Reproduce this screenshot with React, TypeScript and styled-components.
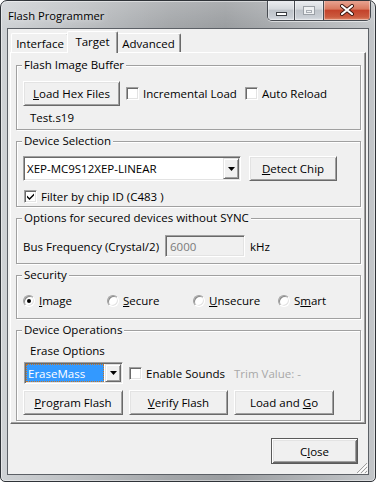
import React from "react";
import styled, { createGlobalStyle, css } from "styled-components";

const FONT = `"Open Sans", "Noto Sans", "Liberation Sans", sans-serif`;
const FS = "11.5px";

const GlobalStyle = createGlobalStyle`
  html, body { margin: 0; padding: 0; background: #ffffff; }
  body { font-family: ${FONT}; font-size: ${FS}; color: #000; }
  #root { width: 376px; height: 482px; }
  * { box-sizing: border-box; }
`;

const Window = styled.div`
  position: relative;
  width: 376px;
  height: 482px;
  border: 1px solid #2f3338;
  border-radius: 7px 7px 5px 5px;
  background: linear-gradient(180deg, rgba(255, 255, 255, 0.18) 0px, rgba(255, 255, 255, 0) 28px),
    linear-gradient(90deg, #cfd2d5 0%, #bdc0c3 20%, #a3a6a9 45%, #9a9da0 60%, #aeb1b4 80%, #c3c6c9 100%);
  box-shadow: inset 0 0 0 1px rgba(255, 255, 255, 0.45);
  padding: 0 6px 6px;
  display: flex;
  flex-direction: column;
  overflow: hidden;
`;

const TitleBar = styled.div`
  height: 27px;
  flex-shrink: 0;
  display: flex;
  align-items: flex-start;
`;

const Title = styled.div`
  font-family: ${FONT};
  font-size: 11.2px;
  line-height: 16px;
  margin: 7px 0 0 1px;
  color: #000;
  text-shadow: 0 0 6px rgba(255, 255, 255, 0.9);
`;

const Captions = styled.div`
  margin: -1px -2px 0 auto;
  display: flex;
  height: 21px;
  border: 1px solid #474b51;
  border-top: none;
  border-radius: 0 0 5px 5px;
  overflow: hidden;
  box-shadow: 0 1px 0 rgba(255, 255, 255, 0.55);
`;

const CapBtn = styled.div<{ $w: number; $close?: boolean }>`
  width: ${(p) => p.$w}px;
  height: 100%;
  display: flex;
  align-items: center;
  justify-content: center;
  box-shadow: inset 0 0 0 1px rgba(255, 255, 255, 0.4);
  background: ${(p) =>
    p.$close
      ? "linear-gradient(180deg, #e9a897 0%, #d9795f 45%, #c4432b 52%, #cb5b3f 85%, #e08a6c 100%)"
      : "linear-gradient(180deg, #eef0f3 0%, #d5d9de 45%, #bec3c9 52%, #c8cdd3 85%, #dce0e5 100%)"};
  & + & {
    border-left: 1px solid #474b51;
  }
`;

const MinIcon = styled.span`
  width: 11px;
  height: 4px;
  margin-top: 7px;
  background: #fff;
  border: 1px solid #3a3d42;
`;

const MaxIcon = styled.span`
  width: 12px;
  height: 9px;
  margin-top: 1px;
  border: 1px solid #9ba0a6;
  background: #eef0f2;
  display: flex;
  align-items: center;
  justify-content: center;
  padding-top: 1px;
`;

const MaxInner = styled.span`
  width: 6px;
  height: 3px;
  border: 1px solid #a8adb3;
`;

const Client = styled.div`
  position: relative;
  flex: 1;
  display: flex;
  flex-direction: column;
  align-items: flex-start;
  background: #f0f0f0;
  border: 1px solid #5c6066;
  padding: 2px 2px 0 2px;
`;

const TabStrip = styled.div`
  height: 21px;
  display: flex;
  align-items: flex-end;
  padding-left: 1px;
`;

const Tab = styled.div<{ $w: number; $active?: boolean }>`
  width: ${(p) => p.$w}px;
  height: 19px;
  display: flex;
  align-items: center;
  justify-content: center;
  padding-top: 1px;
  background: #f0f0f0;
  border-top: 1px solid #fff;
  border-left: 1px solid #fff;
  border-right: 1px solid #696969;
  box-shadow: inset -1px 0 0 #a0a0a0;
  border-radius: 2px 2px 0 0;
  font-size: ${FS};
  line-height: 15px;
  white-space: nowrap;
  ${(p) =>
    p.$active &&
    css`
      position: relative;
      z-index: 1;
      width: ${p.$w + 4}px;
      height: 22px;
      margin: 0 -2px -1px;
      padding: 0 0 2px;
    `}
`;

const Panel = styled.div`
  width: 356px;
  height: 372px;
  border: 1px solid;
  border-color: #fff #696969 #696969 #fff;
  box-shadow: inset -1px -1px 0 #a0a0a0;
  padding: 12px 4px 0 5px;
  display: flex;
  flex-direction: column;
  gap: 11px;
`;

const Group = styled.div<{ $h: number; $pt: number }>`
  position: relative;
  flex-shrink: 0;
  height: ${(p) => p.$h}px;
  border: 1px solid #a0a0a0;
  box-shadow: inset 1px 1px 0 #fff, 1px 1px 0 #fff;
  padding: ${(p) => p.$pt}px 0 0 6px;
  display: flex;
  flex-direction: column;
  align-items: flex-start;
`;

const Legend = styled.span`
  position: absolute;
  top: -9px;
  left: 5px;
  padding: 0 2px;
  background: #f0f0f0;
  font-size: ${FS};
  line-height: 16px;
  white-space: nowrap;
`;

const Row = styled.div<{ $mt?: number; $ml?: number; $gap?: number }>`
  display: flex;
  align-items: center;
  margin-top: ${(p) => p.$mt ?? 0}px;
  margin-left: ${(p) => p.$ml ?? 0}px;
  gap: ${(p) => p.$gap ?? 0}px;
`;

const Text = styled.span<{ $ml?: number; $mt?: number; $w?: number; $color?: string }>`
  display: inline-block;
  font-size: ${FS};
  line-height: 15px;
  white-space: nowrap;
  margin-left: ${(p) => p.$ml ?? 0}px;
  margin-top: ${(p) => p.$mt ?? 0}px;
  ${(p) => p.$w && `width: ${p.$w}px;`}
  color: ${(p) => p.$color ?? "#000"};
`;

const U = styled.span`
  text-decoration: underline;
  text-underline-offset: 1px;
`;

const Button = styled.button<{ $w: number; $h?: number; $ml?: number; $default?: boolean }>`
  width: ${(p) => p.$w}px;
  height: ${(p) => p.$h ?? 25}px;
  margin-left: ${(p) => p.$ml ?? 0}px;
  padding: 0;
  font-family: ${FONT};
  font-size: ${FS};
  line-height: 15px;
  color: #000;
  background: #f0f0f0;
  border: 1px solid;
  border-color: #fff #696969 #696969 #fff;
  box-shadow: inset 1px 1px 0 #e3e3e3, inset -1px -1px 0 #a0a0a0;
  white-space: nowrap;
  ${(p) =>
    p.$default &&
    css`
      border-color: #5a5a5a;
      box-shadow: inset 1px 1px 0 #fff, inset -1px -1px 0 #696969, inset 2px 2px 0 #e3e3e3,
        inset -2px -2px 0 #a0a0a0;
    `}
`;

const CheckItem = styled.label<{ $w?: number; $ml?: number }>`
  display: inline-flex;
  align-items: center;
  gap: 4px;
  margin-left: ${(p) => p.$ml ?? 0}px;
  ${(p) => p.$w && `width: ${p.$w}px;`}
  font-size: ${FS};
  line-height: 15px;
  white-space: nowrap;
`;

const CheckBox = styled.span`
  width: 13px;
  height: 13px;
  flex-shrink: 0;
  display: flex;
  align-items: center;
  justify-content: center;
  background: #fff;
  border: 1px solid;
  border-color: #a0a0a0 #fff #fff #a0a0a0;
  box-shadow: inset 1px 1px 0 #696969, inset -1px -1px 0 #e3e3e3;
`;

const Sunken = styled.div<{ $w: number; $h: number; $ml?: number; $bg?: string }>`
  width: ${(p) => p.$w}px;
  height: ${(p) => p.$h}px;
  margin-left: ${(p) => p.$ml ?? 0}px;
  display: flex;
  align-items: stretch;
  background: ${(p) => p.$bg ?? "#fff"};
  border: 1px solid;
  border-color: #a0a0a0 #fff #fff #a0a0a0;
  box-shadow: inset 1px 1px 0 #696969, inset -1px -1px 0 #e3e3e3;
  padding: 1px;
`;

const FieldText = styled.div<{ $color?: string; $pl?: number }>`
  flex: 1;
  display: flex;
  align-items: center;
  padding-left: ${(p) => p.$pl ?? 2}px;
  font-size: ${FS};
  line-height: 15px;
  color: ${(p) => p.$color ?? "#000"};
  white-space: nowrap;
`;

const Selected = styled.div`
  flex: 1;
  display: flex;
  align-items: center;
  margin: 0 1px 0 0;
  padding-left: 1px;
  background: #3399ff;
  color: #fff;
  border: 1px dotted #c9741e;
  font-size: ${FS};
  line-height: 15px;
  white-space: nowrap;
`;

const DropBtn = styled.div`
  width: 16px;
  flex-shrink: 0;
  display: flex;
  align-items: center;
  justify-content: center;
  background: #f0f0f0;
  border: 1px solid;
  border-color: #e3e3e3 #696969 #696969 #e3e3e3;
  box-shadow: inset 1px 1px 0 #fff, inset -1px -1px 0 #a0a0a0;
`;

const RadioItem = styled.label`
  display: inline-flex;
  align-items: center;
  gap: 4px;
  font-size: ${FS};
  line-height: 15px;
  white-space: nowrap;
`;

const Radio = styled.span<{ $on?: boolean }>`
  position: relative;
  width: 12px;
  height: 12px;
  flex-shrink: 0;
  border-radius: 50%;
  background: #fff;
  border: 1px solid;
  border-color: #a0a0a0 #fff #fff #a0a0a0;
  box-shadow: inset 1px 1px 0 #8a8a8a, inset -1px -1px 0 #e3e3e3;
  ${(p) =>
    p.$on &&
    css`
      &::after {
        content: "";
        position: absolute;
        left: 3px;
        top: 3px;
        width: 4px;
        height: 4px;
        border-radius: 50%;
        background: #000;
      }
    `}
`;

const RadioGrid = styled.div`
  display: grid;
  grid-template-columns: 84px 86px 85px auto;
  align-items: center;
`;

const Footer = styled.div`
  align-self: stretch;
  display: flex;
  justify-content: flex-end;
  padding: 14px 8px 0 0;
`;

const Grip = styled.svg`
  position: absolute;
  right: 0;
  bottom: 0;
`;

const Arrow = () => (
  <svg width="7" height="4" viewBox="0 0 7 4">
    <polygon points="0,0 7,0 3.5,4" fill="#000" />
  </svg>
);

const Check = () => (
  <svg width="9" height="9" viewBox="0 0 9 9">
    <path d="M1 3.5 L3.5 6 L8 1.5 L8 3.5 L3.5 8 L1 5.5 Z" fill="#000" />
  </svg>
);

export default function App() {
  return (
    <>
      <GlobalStyle />
      <Window>
        <TitleBar>
          <Title>Flash Programmer</Title>
          <Captions>
            <CapBtn $w={26}>
              <MinIcon />
            </CapBtn>
            <CapBtn $w={29}>
              <MaxIcon>
                <MaxInner />
              </MaxIcon>
            </CapBtn>
            <CapBtn $w={47} $close>
              <svg width="16" height="12" viewBox="0 0 16 12">
                <path d="M3 2 L13 10 M13 2 L3 10" stroke="#3b1710" strokeWidth="4" strokeLinecap="round" />
                <path d="M3 2 L13 10 M13 2 L3 10" stroke="#fff" strokeWidth="2.2" strokeLinecap="round" />
              </svg>
            </CapBtn>
          </Captions>
        </TitleBar>
        <Client>
          <TabStrip>
            <Tab $w={58}>Interface</Tab>
            <Tab $w={47} $active>
              Target
            </Tab>
            <Tab $w={65}>Advanced</Tab>
          </TabStrip>
          <Panel>
            <Group $h={65} $pt={15}>
              <Legend>Flash Image Buffer</Legend>
              <Row>
                <Button $w={97}>
                  <U>L</U>oad Hex Files
                </Button>
                <CheckItem $w={119} $ml={6}>
                  <CheckBox />
                  Incremental Load
                </CheckItem>
                <CheckItem>
                  <CheckBox />
                  Auto Reload
                </CheckItem>
              </Row>
              <Text $ml={7} $mt={4}>
                Test.s19
              </Text>
            </Group>

            <Group $h={66} $pt={14}>
              <Legend>Device Selection</Legend>
              <Row>
                <Sunken $w={218} $h={25}>
                  <FieldText>XEP-MC9S12XEP-LINEAR</FieldText>
                  <DropBtn>
                    <Arrow />
                  </DropBtn>
                </Sunken>
                <Button $w={88} $ml={8}>
                  <U>D</U>etect Chip
                </Button>
              </Row>
              <Row $mt={8} $ml={1}>
                <CheckItem>
                  <CheckBox>
                    <Check />
                  </CheckBox>
                  Filter by chip ID (C483 )
                </CheckItem>
              </Row>
            </Group>

            <Group $h={46} $pt={16}>
              <Legend>Options for secured devices without SYNC</Legend>
              <Row>
                <Text $w={142}>Bus Frequency (Crystal/2)</Text>
                <Sunken $w={80} $h={22} $bg="#f0f0f0">
                  <FieldText $color="#7a7a7a" $pl={3}>
                    6000
                  </FieldText>
                </Sunken>
                <Text $ml={5}>kHz</Text>
              </Row>
            </Group>

            <Group $h={44} $pt={17}>
              <Legend>Security</Legend>
              <RadioGrid>
                <RadioItem>
                  <Radio $on />
                  <span>
                    <U>I</U>mage
                  </span>
                </RadioItem>
                <RadioItem>
                  <Radio />
                  <span>
                    <U>S</U>ecure
                  </span>
                </RadioItem>
                <RadioItem>
                  <Radio />
                  <span>
                    <U>U</U>nsecure
                  </span>
                </RadioItem>
                <RadioItem>
                  <Radio />
                  <span>
                    S<U>m</U>art
                  </span>
                </RadioItem>
              </RadioGrid>
            </Group>

            <Group $h={91} $pt={12}>
              <Legend>Device Operations</Legend>
              <Text $ml={7}>Erase Options</Text>
              <Row $mt={4} $ml={1}>
                <Sunken $w={99} $h={22}>
                  <Selected>EraseMass</Selected>
                  <DropBtn>
                    <Arrow />
                  </DropBtn>
                </Sunken>
                <CheckItem $w={105} $ml={6}>
                  <CheckBox />
                  Enable Sounds
                </CheckItem>
                <Text $color="#a8a8a8">Trim Value: -</Text>
              </Row>
              <Row $mt={6} $gap={6}>
                <Button $w={100}>
                  <U>P</U>rogram Flash
                </Button>
                <Button $w={99}>
                  <U>V</U>erify Flash
                </Button>
                <Button $w={100}>
                  Load and <U>G</U>o
                </Button>
              </Row>
            </Group>
          </Panel>
          <Footer>
            <Button $w={87} $h={26} $default>
              C<U>l</U>ose
            </Button>
          </Footer>
          <Grip width="12" height="12" viewBox="0 0 12 12">
            <path d="M11 1 L1 11 M11 5 L5 11 M11 9 L9 11" stroke="#a0a0a0" strokeWidth="1" />
            <path d="M12 2 L2 12 M12 6 L6 12 M12 10 L10 12" stroke="#fff" strokeWidth="1" />
          </Grip>
        </Client>
      </Window>
    </>
  );
}
